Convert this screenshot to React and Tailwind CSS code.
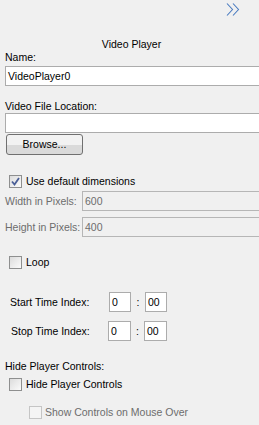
import React from "react";

function Checkbox({ checked, disabled }) {
  return (
    <span
      className={
        "flex h-[13px] w-[13px] shrink-0 items-center justify-center border " +
        (disabled
          ? "border-[#c5c5c5] bg-[#f4f4f4]"
          : "border-[#8e8f8f] bg-gradient-to-br from-[#dcdcdc] to-[#fbfbfb]")
      }
    >
      {checked && (
        <svg width="9" height="9" viewBox="0 0 9 9">
          <path
            d="M1 4.5 L3.5 7.5 L8 1"
            fill="none"
            stroke="#4a5f97"
            strokeWidth="1.8"
          />
        </svg>
      )}
    </span>
  );
}

function Field({ value, disabled, className = "" }) {
  return (
    <div
      className={
        "flex h-[20px] shrink-0 items-center border px-[2px] " +
        (disabled
          ? "border-[#b6b6b6] bg-[#f0f0f0] text-[#6d6d6d] "
          : "border-[#acacac] bg-white text-black ") +
        className
      }
    >
      {value}
    </div>
  );
}

export default function App() {
  return (
    <div className="h-[425px] w-[259px] overflow-hidden whitespace-nowrap bg-[#f0f0f0] font-['Liberation_Sans',Arial,sans-serif] text-[10.5px] leading-[13px] text-black">
      {/* collapse chevron */}
      <div className="flex h-[38px] justify-end pr-[19px] pt-[3px]">
        <svg width="14" height="13" viewBox="0 0 14 13">
          <path
            d="M1 0.5 L6.5 6.5 L1 12.5 M7 0.5 L12.5 6.5 L7 12.5"
            fill="none"
            stroke="#4a7bc0"
            strokeWidth="1.1"
          />
        </svg>
      </div>

      <div className="h-[13px] pl-[4px] text-center">Video Player</div>

      <div className="px-[5px]">
        <div className="h-[13px]">Name:</div>
        <Field value="VideoPlayer0" className="mt-[2px] w-[270px]" />

        <div className="mt-[14px] h-[13px]">Video File Location:</div>
        <Field value="" className="w-[270px]" />

        <button className="mt-[1px] ml-[1px] flex h-[21px] w-[77px] items-center justify-center rounded-[3px] border border-[#707070] bg-gradient-to-b from-[#f2f2f2] from-50% to-[#dadada] to-50% text-[10.5px] leading-[13px]">
          Browse...
        </button>

        <div className="mt-[20px] flex h-[13px] items-center gap-[4px] pl-[4px]">
          <Checkbox checked />
          <span>Use default dimensions</span>
        </div>

        <div className="mt-[3px] flex h-[20px] items-center text-[#6d6d6d]">
          <span className="w-[77px] shrink-0">Width in Pixels:</span>
          <Field value="600" disabled className="w-[200px]" />
        </div>
        <div className="mt-[6px] flex h-[20px] items-center text-[#6d6d6d]">
          <span className="w-[77px] shrink-0">Height in Pixels:</span>
          <Field value="400" disabled className="w-[200px]" />
        </div>

        <div className="mt-[19px] flex h-[13px] items-center gap-[4px] pl-[4px]">
          <Checkbox />
          <span>Loop</span>
        </div>

        <div className="mt-[23px] flex h-[20px] items-center pl-[5px]">
          <span className="w-[99px] shrink-0">Start Time Index:</span>
          <Field value="0" className="w-[22px]" />
          <span className="w-[14px] text-center">:</span>
          <Field value="00" className="w-[22px]" />
        </div>
        <div className="mt-[9px] flex h-[20px] items-center pl-[6px]">
          <span className="w-[97px] shrink-0">Stop Time Index:</span>
          <Field value="0" className="w-[23px]" />
          <span className="w-[13px] text-center">:</span>
          <Field value="00" className="w-[23px]" />
        </div>

        <div className="mt-[19px] h-[13px]">Hide Player Controls:</div>
        <div className="mt-[5px] flex h-[13px] items-center gap-[4px] pl-[4px]">
          <Checkbox />
          <span>Hide Player Controls</span>
        </div>
        <div className="mt-[15px] flex h-[13px] items-center gap-[3px] pl-[24px] text-[#6d6d6d]">
          <Checkbox disabled />
          <span>Show Controls on Mouse Over</span>
        </div>
      </div>
    </div>
  );
}
